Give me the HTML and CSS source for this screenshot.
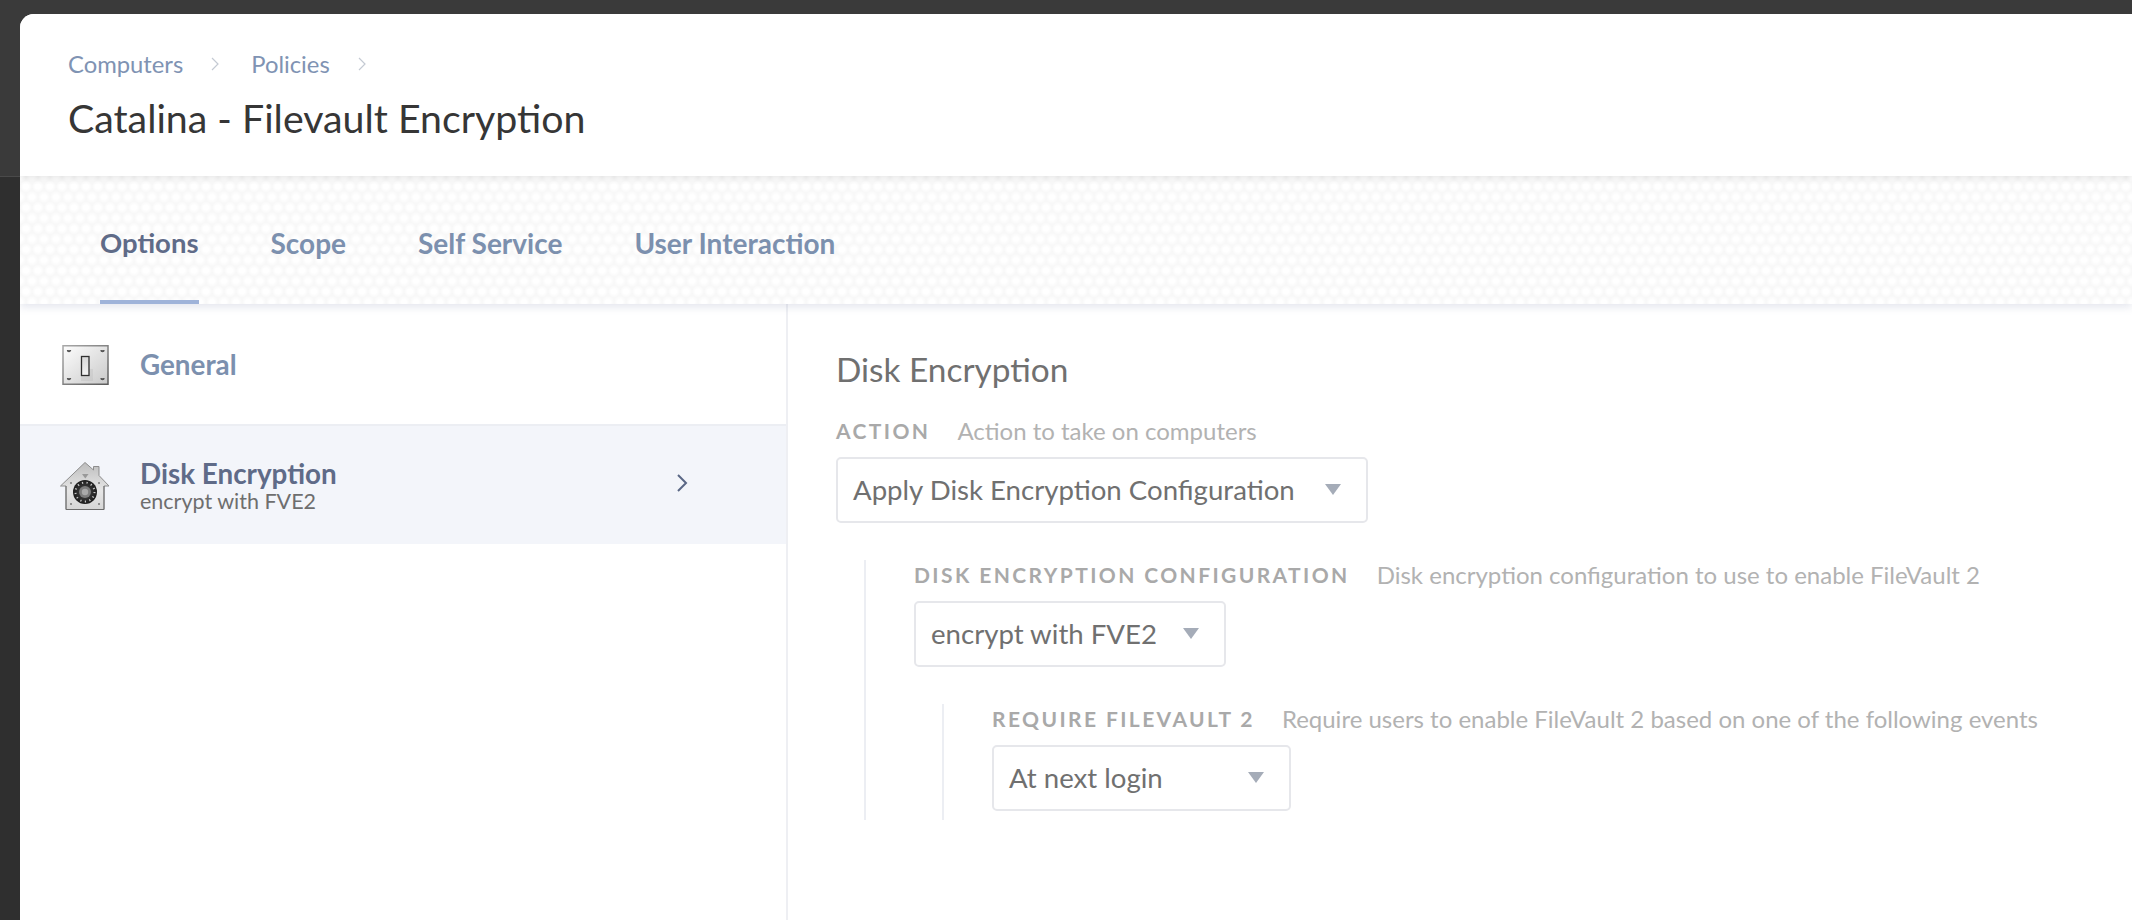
FILE: index.html
```html
<!DOCTYPE html>
<html lang="en">
<head>
  <meta charset="UTF-8" />
  <title>Catalina - Filevault Encryption</title>
  <link rel="stylesheet" href="styles.css">
</head>
<body>
  <div class="card">
    <header class="page-head">
      <div class="crumbs">
        <a href="#">Computers</a>
        <svg class="crumb-sep" width="8" height="14" viewBox="0 0 8 14"><path d="M1 1l6 6-6 6" fill="none" stroke="#c4cad3" stroke-width="1.2"/></svg>
        <a href="#">Policies</a>
        <svg class="crumb-sep" width="8" height="14" viewBox="0 0 8 14"><path d="M1 1l6 6-6 6" fill="none" stroke="#c4cad3" stroke-width="1.2"/></svg>
      </div>
      <h1>Catalina - Filevault Encryption</h1>
    </header>

    <nav class="tabs">
      <a href="#" class="active">Options</a>
      <a href="#">Scope</a>
      <a href="#">Self Service</a>
      <a href="#">User Interaction</a>
    </nav>

    <div class="body">
      <aside class="side">
        <a href="#" class="side-item">
          <svg class="side-icon" width="52" height="50" viewBox="0 0 52 50">
            <defs>
              <linearGradient id="plate" x1="0" y1="0" x2="1" y2="1">
                <stop offset="0" stop-color="#fdfdfd"/>
                <stop offset="1" stop-color="#c9c9c9"/>
              </linearGradient>
              <linearGradient id="plateEdge" x1="0" y1="0" x2="1" y2="1">
                <stop offset="0" stop-color="#a8a8a8"/>
                <stop offset="1" stop-color="#5c5c5c"/>
              </linearGradient>
              <linearGradient id="toggle" x1="0" y1="0" x2="0" y2="1">
                <stop offset="0" stop-color="#d8d8d8"/>
                <stop offset="1" stop-color="#f4f4f4"/>
              </linearGradient>
            </defs>
            <rect x="5" y="6.75" width="45" height="38.5" fill="url(#plate)" stroke="url(#plateEdge)" stroke-width="1.5"/>
            <rect x="23" y="30" width="12" height="12" fill="#bbb" opacity="0.35"/>
            <path d="M9.5 11a1.5 1.5 0 0 0 3 0M43 11a1.5 1.5 0 0 0 3 0M9.5 39a1.5 1.5 0 0 0 3 0M43 39a1.5 1.5 0 0 0 3 0" fill="#777" stroke="#555" stroke-width="1.4"/>
            <rect x="23.5" y="17.5" width="7.5" height="19" fill="url(#toggle)" stroke="#2f2f2f" stroke-width="1.3"/>
          </svg>
          <span class="side-text"><span class="side-title">General</span></span>
        </a>
        <a href="#" class="side-item selected">
          <svg class="side-icon" width="52" height="50" viewBox="0 0 52 50">
            <defs>
              <linearGradient id="roof" x1="0" y1="0" x2="0" y2="1">
                <stop offset="0" stop-color="#bdbdbd"/>
                <stop offset="0.6" stop-color="#e6e6e6"/>
                <stop offset="1" stop-color="#d6d6d6"/>
              </linearGradient>
              <radialGradient id="dial">
                <stop offset="0" stop-color="#4a4a4a"/>
                <stop offset="1" stop-color="#1d1d1d"/>
              </radialGradient>
            </defs>
            <path d="M27 2.5L35.5 10V6.5h5.5v9L51 26h-5v23.5H8V26H2.5z" fill="url(#roof)" stroke="#8d8d8d" stroke-width="1"/>
            <path d="M8 26v23.5h38V26" fill="none" stroke="#6c6c6c" stroke-width="1"/>
            <path d="M24 14h6.5l-3.2 4.5z" fill="#999"/>
            <circle cx="13" cy="23" r="1" fill="#777"/>
            <circle cx="41" cy="23" r="1" fill="#777"/>
            <circle cx="13" cy="44" r="1" fill="#777"/>
            <circle cx="41" cy="44" r="1" fill="#777"/>
            <circle cx="27" cy="32" r="12" fill="url(#dial)"/>
            <circle cx="27" cy="32" r="9.5" fill="none" stroke="#c8c8c8" stroke-width="2" stroke-dasharray="1.2 3.4"/>
            <circle cx="27" cy="32" r="6" fill="#7d7d7d"/>
            <circle cx="27" cy="32" r="3.2" fill="#a9a9a9"/>
          </svg>
          <span class="side-text">
            <span class="side-title">Disk Encryption</span>
            <span class="side-sub">encrypt with FVE2</span>
          </span>
          <svg class="side-arrow" width="12" height="20" viewBox="0 0 12 20"><path d="M2 2l8 8-8 8" fill="none" stroke="#5a6785" stroke-width="2"/></svg>
        </a>
      </aside>

      <main class="content">
        <h2>Disk Encryption</h2>

        <div class="field">
          <div class="field-label"><b>ACTION</b><span>Action to take on computers</span></div>
          <div class="select select-action">Apply Disk Encryption Configuration<i class="caret"></i></div>
        </div>

        <div class="nested nested-first">
          <div class="field">
            <div class="field-label"><b>DISK ENCRYPTION CONFIGURATION</b><span>Disk encryption configuration to use to enable FileVault 2</span></div>
            <div class="select select-config">encrypt with FVE2<i class="caret"></i></div>
          </div>

          <div class="nested nested-second">
            <div class="field">
              <div class="field-label"><b>REQUIRE FILEVAULT 2</b><span>Require users to enable FileVault 2 based on one of the following events</span></div>
              <div class="select select-login">At next login<i class="caret"></i></div>
            </div>
          </div>
        </div>
      </main>
    </div>
  </div>
</body>
</html>
```

FILE: styles.css
```css
html, body {
  margin: 0;
  padding: 0;
  height: 100%;
  overflow: hidden;
}
body {
  background: linear-gradient(#3a3a3a 0, #3a3a3a 176px, #4a4a4a 176px, #4a4a4a 177px, #2f2f2f 177px);
  font-family: Lato, "Liberation Sans", sans-serif;
  color: #666;
}
a { text-decoration: none; }

.card {
  margin: 14px 0 0 20px;
  height: 906px;
  background: white;
  border-top-left-radius: 14px;
  display: flex;
  flex-direction: column;
  overflow: hidden;
}

.page-head {
  height: 162px;
  box-sizing: border-box;
  padding: 34px 0 0 48px;
  position: relative;
  z-index: 2;
  background: white;
  box-shadow: 0 2px 6px rgba(0, 0, 0, 0.1);
}
.crumbs {
  display: flex;
  align-items: center;
  height: 32px;
  font-size: 23.8px;
}
.crumbs a { color: #8093b3; }
.crumb-sep { margin: 0 32px 0 28px; }
h1 {
  margin: 13px 0 0;
  font-size: 39.3px;
  line-height: 50px;
  font-weight: 400;
  color: #363636;
}

.tabs {
  height: 128px;
  box-sizing: border-box;
  padding-left: 80px;
  display: flex;
  gap: 72px;
  position: relative;
  z-index: 1;
  background-color: #f8f8f8;
  background-image:
    radial-gradient(circle, #ffffff 2.5px, transparent 6px),
    radial-gradient(circle, #ffffff 2.5px, transparent 6px);
  background-size: 12px 21px;
  background-position: 0 0, 6px 10.5px;
  box-shadow: 0 3px 8px rgba(120, 130, 170, 0.2);
}
.tabs a {
  font-size: 28px;
  font-weight: 700;
  color: #7c90ae;
  line-height: 134px;
  height: 128px;
  box-sizing: border-box;
}
.tabs a.active {
  font-size: 27.5px;
  color: #5f6b88;
  border-bottom: 4px solid #9fb3d9;
}

.body {
  flex: 1;
  display: flex;
  min-height: 0;
}
.side {
  width: 766px;
  flex: none;
  padding-top: 2px;
  border-right: 2px solid #eeeff3;
}
.side-item {
  display: flex;
  align-items: center;
  height: 120px;
  padding: 0 98px 2px 38px;
  box-sizing: border-box;
  border-bottom: 2px solid #eceef3;
}
.side-item.selected {
  background: #f3f5fa;
  border-bottom: none;
  height: 118px;
  padding-bottom: 0;
}
.side-text {
  margin-left: 30px;
  display: flex;
  flex-direction: column;
}
.side-title {
  font-size: 27.8px;
  line-height: 31px;
  font-weight: 700;
  color: #7c90ae;
}
.selected .side-title { color: #5f6b88; }
.side-sub {
  font-size: 21.5px;
  line-height: 24px;
  color: #6e6e6e;
}
.side-arrow {
  margin-left: auto;
  margin-bottom: 4px;
}

.content {
  flex: 1;
  padding: 45px 0 0 48px;
}
h2 {
  margin: 0;
  font-size: 33.4px;
  line-height: 40px;
  font-weight: 400;
  color: #707070;
}
.field-label {
  font-size: 24px;
  line-height: 30px;
  color: #b2b2b2;
  display: flex;
  gap: 27px;
  white-space: nowrap;
}
.field-label b {
  font-size: 21px;
  letter-spacing: 2.4px;
  color: #a9a9a9;
}
.content > .field { margin-top: 27px; }
.select {
  margin-top: 11px;
  height: 66px;
  box-sizing: border-box;
  border: 2px solid #e6e7eb;
  border-radius: 5px;
  background: white;
  display: flex;
  align-items: center;
  justify-content: space-between;
  padding: 0 25px 2px 15px;
  font-size: 27.6px;
  color: #707070;
}
.select-action { width: 532px; }
.select-config { width: 312px; }
.select-login { width: 299px; }
.caret {
  width: 0;
  height: 0;
  border-left: 8px solid transparent;
  border-right: 8px solid transparent;
  border-top: 11px solid #a5acb8;
}

.nested {
  border-left: 2px solid #eceef3;
  padding-left: 48px;
}
.nested-first {
  margin: 37px 0 0 28px;
  height: 260px;
}
.nested-second {
  margin: 37px 0 0 28px;
  height: 116px;
}
```
